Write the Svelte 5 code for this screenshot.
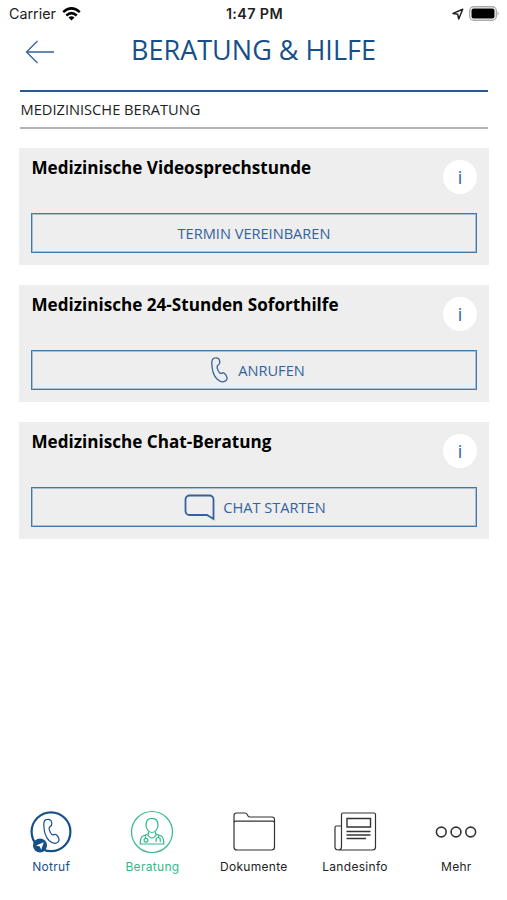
<script lang="ts">
interface Service {
  title: string;
  action: string;
  icon?: 'phone' | 'chat';
}

const services: Service[] = [
  { title: 'Medizinische Videosprechstunde', action: 'TERMIN VEREINBAREN' },
  { title: 'Medizinische 24-Stunden Soforthilfe', action: 'ANRUFEN', icon: 'phone' },
  { title: 'Medizinische Chat-Beratung', action: 'CHAT STARTEN', icon: 'chat' },
];

const tabs = [
  { id: 'notruf', label: 'Notruf' },
  { id: 'beratung', label: 'Beratung' },
  { id: 'dokumente', label: 'Dokumente' },
  { id: 'landesinfo', label: 'Landesinfo' },
  { id: 'mehr', label: 'Mehr' },
];

let active = $state('beratung');
</script>

{#snippet handset()}
	<path d="M.8 6.2C.7 3 2 1 4.4.9 6.7.7 8.500 2.200 8.800 4.700 9.100 7 7.800 7.800 6.700 8.500 5.700 9.400 6.400 12.100 7.400 14 8.600 16.100 9.700 16.900 10.800 16.200 12.300 15.200 13.500 16 14.900 18.100 16.500 20.600 16.500 22.300 15 23.600 13 25.400 9.500 25.100 6 22 2.500 18.500.9 11.500.8 6.200Z" />
{/snippet}

<div class="screen">
	<div class="status">
		<div class="status__side">
			<span>Carrier</span>
			<svg width="19" height="14" viewBox="0 0 19 14">
				<g fill="none" stroke="#000" stroke-width="2.500">
					<path d="M1.200 5.200Q9.500-2.400 17.800 5.200" />
					<path d="M4.300 8.500Q9.500 3.800 14.700 8.500" />
				</g>
				<path d="M9.500 13.500 6.500 10.400Q9.500 7.900 12.500 10.400Z" />
			</svg>
		</div>
		<span class="status__time">1:47 PM</span>
		<div class="status__side status__side--end">
			<svg width="12" height="12" viewBox="0 0 12 12">
				<path d="M10.700 1.200 1 5.400 5.700 6.300 6.700 11Z" fill="none" stroke="#222" stroke-width="1.500" stroke-linejoin="round" />
			</svg>
			<svg width="31" height="15" viewBox="0 0 31 15">
				<rect x=".7" y=".7" width="26.600" height="13.600" rx="4" fill="#fff" stroke="#aaa" stroke-width="1.400" />
				<rect x="2.500" y="2.500" width="23" height="10" rx="2" />
				<path d="M28.500 5Q31 7.500 28.500 10Z" fill="#aaa" />
			</svg>
		</div>
	</div>

	<header class="header">
		<button class="header__back" aria-label="Zurück">
			<svg width="30" height="24" viewBox="0 0 30 24">
				<path d="M29 12H1.500M12.500 1 1.500 12l11 11" fill="none" stroke="#32639c" stroke-width="1.300" />
			</svg>
		</button>
		<h1 class="header__title">BERATUNG &amp; HILFE</h1>
	</header>

	<main class="content">
		<h2 class="section">MEDIZINISCHE BERATUNG</h2>

		{#each services as service}
			<section class="card">
				<div class="card__head">
					<h3 class="card__title">{service.title}</h3>
					<button class="card__info" aria-label="Info">i</button>
				</div>
				<button class="card__action">
					{#if service.icon === 'phone'}
						<svg class="phone" width="18" height="26" viewBox="0 0 18 26">
							{@render handset()}
						</svg>
					{:else if service.icon === 'chat'}
						<svg class="chat" width="31" height="27" viewBox="0 0 31 27">
							<path d="M5.500 1.500h20a4 4 0 0 1 4 4v19.500l-6.500-4H5.500a4 4 0 0 1-4-4V5.500a4 4 0 0 1 4-4Z" />
						</svg>
					{/if}
					<span>{service.action}</span>
				</button>
			</section>
		{/each}
	</main>

	<nav class="tabs">
		{#each tabs as tab}
			<button
				class="tab"
				class:tab--notruf={tab.id === 'notruf'}
				class:tab--active={tab.id === active}
				onclick={() => (active = tab.id)}
			>
				<svg width="44" height="44" viewBox="0 0 44 44">
					{#if tab.id === 'notruf'}
						<circle cx="22" cy="21.700" r="19.400" stroke-width="2.200" />
						<g transform="translate(14 8.500)">{@render handset()}</g>
						<circle cx="11" cy="35.500" r="7" fill="currentColor" stroke="none" />
						<path d="M14.800 32.300 7 35.500 10.800 36.400 12.200 39.700Z" fill="#fff" stroke="none" />
					{:else if tab.id === 'beratung'}
						<circle cx="22" cy="22" r="20.500" />
						<path d="M16 15c0-5 2.700-6.700 6-6.700s6 1.700 6 6.700c0 4-2.700 7.500-6 7.500S16 19 16 15Z" />
						<path d="M18.500 21.500v2.300L13 26c-2.300 1-2.800 3-2.800 8h23.600c0-5-.5-7-2.800-8l-5.500-2.200v-2.300" />
						<path d="M17.500 24.500Q22 31.500 26.500 24.500" />
						<circle cx="16" cy="30.200" r="1.900" />
						<path d="M15.500 28.200v-3M26.200 32c-.5-3 .3-4.500 2-4.500s2.500 1.500 2 4.500M28.400 27.500v-2.300" />
					{:else if tab.id === 'dokumente'}
						<path d="M2 37V5.500q0-2.500 2.500-2.500h8.500q1.500 0 2.200 1.500l.8 1.500q.5 1 2 1H40q2.500 0 2.500 2.500V37q0 3-3 3H5q-3 0-3-3ZM2 13q0-1.800 2-1.800h36.500q2 0 2 1.800" />
					{:else if tab.id === 'landesinfo'}
						<path d="M8.500 37V4.500q0-1.500 1.500-1.500h31q1.500 0 1.500 1.500V37q0 3-3 3h-34M8.500 16H3.500q-1.500 0-1.500 1.500V37q0 3 3.200 3t3.300-3" />
						<path d="M14 8.500h23.500v8.500H14ZM13.500 21.500h24M13.500 25h24M13.500 28.500h19.500" stroke-width="1.400" />
					{:else}
						<g stroke-width="1.600">
							<circle cx="7.300" cy="22" r="4.900" />
							<circle cx="22" cy="22" r="4.900" />
							<circle cx="36.700" cy="22" r="4.900" />
						</g>
					{/if}
				</svg>
				<span>{tab.label}</span>
			</button>
		{/each}
	</nav>
</div>

<style>
	:global(body) {
		margin: 0;
		background: #fff;
	}

	.screen {
		display: flex;
		flex-direction: column;
		width: 507px;
		height: 900px;
		overflow: hidden;
		font-family: "Open Sans", sans-serif;
		color: #000;
	}

	button {
		padding: 0;
		border: none;
		background: none;
		font-family: inherit;
		cursor: pointer;
	}

	h1,
	h2,
	h3 {
		margin: 0;
		font-weight: 400;
	}

	svg {
		display: block;
		flex: none;
	}

	.status {
		display: grid;
		grid-template-columns: 1fr auto 1fr;
		align-items: center;
		height: 27px;
		padding: 0 7px 0 9px;
		font-family: Inter, sans-serif;
		font-size: 14.300px;
		color: #222;
	}

	.status__side {
		display: flex;
		align-items: center;
		gap: 6px;
	}

	.status__side--end {
		justify-content: flex-end;
		gap: 5px;
	}

	.status__time {
		font-weight: 600;
		letter-spacing: 0.4px;
	}

	.header {
		display: grid;
		grid-template-columns: 56px 1fr 56px;
		align-items: center;
		height: 46px;
	}

	.header__back {
		padding: 4px 0 0 25px;
	}

	.header__title {
		text-align: center;
		font-size: 27px;
		line-height: 46px;
		white-space: nowrap;
		color: #175089;
	}

	.content {
		flex: 1;
		padding: 17px 18px 0 19px;
	}

	.section {
		height: 35px;
		margin: 0 1px 19px;
		padding-left: 0.500px;
		border-top: 2px solid #235b91;
		border-bottom: 2px solid #b3b3b3;
		font-size: 14.650px;
		line-height: 35px;
		color: #222;
	}

	.card {
		box-sizing: border-box;
		height: 117px;
		margin-bottom: 20px;
		padding: 6px 12px 12px;
		background: #eee;
	}

	.card__head {
		display: flex;
		justify-content: space-between;
		height: 59px;
	}

	.card__title {
		padding-left: 0.500px;
		font-size: 17.100px;
		font-weight: 700;
		line-height: 27px;
	}

	.card__info {
		width: 34px;
		height: 34px;
		margin-top: 6px;
		border-radius: 50%;
		background: #fff;
		font-size: 18px;
		line-height: 32px;
		color: #32639c;
	}

	.card__action {
		display: flex;
		justify-content: center;
		align-items: center;
		gap: 8px;
		width: 100%;
		height: 40px;
		border: 1px solid #4478a8;
		box-shadow: inset 0 0 0 1px rgba(68, 120, 168, 0.4);
		font-size: 14.600px;
		color: #32639c;
	}

	.card__action svg {
		fill: none;
		stroke: currentColor;
		stroke-width: 1.300;
	}

	.card__action .phone {
		margin-left: 8px;
		margin-right: 1px;
	}

	.card__action .chat {
		margin-left: 2px;
		stroke-width: 1.800;
	}

	.tabs {
		display: grid;
		grid-template-columns: repeat(5, 101.300px);
		height: 90px;
		padding-left: 0.500px;
	}

	.tab {
		display: flex;
		flex-direction: column;
		align-items: center;
		font-family: Inter, sans-serif;
		font-size: 12px;
		line-height: 16px;
		letter-spacing: 0.3px;
		color: #333;
	}

	.tab svg {
		margin-bottom: 5px;
		fill: none;
		stroke: currentColor;
		stroke-width: 1.200;
	}

	.tab span {
		color: #222;
	}

	.tab--notruf,
	.tab--notruf span {
		color: #175089;
	}

	.tab--active,
	.tab--active span {
		color: #35b98a;
	}
</style>
